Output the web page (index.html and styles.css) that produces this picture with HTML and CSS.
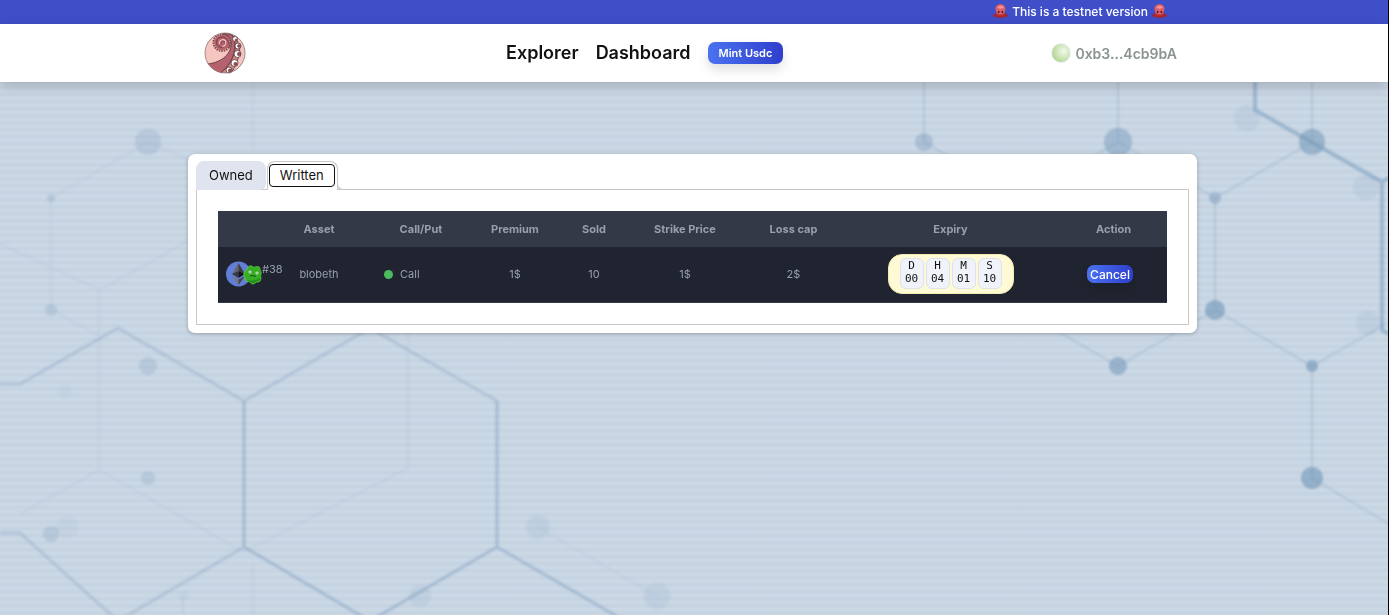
FILE: index.html
```html
<!DOCTYPE html>
<html lang="en">
<head>
    <meta charset="UTF-8">
    <meta name="viewport" content="width=device-width, initial-scale=1.0">
    <title>Dashboard</title>
    <link rel="stylesheet" href="styles.css">
</head>
<body>
    <!-- Molecule backdrop -->
    <svg class="backdrop" viewBox="0 0 1389 615" preserveAspectRatio="xMidYMid slice" aria-hidden="true">
        <defs>
            <filter id="soft"><feGaussianBlur stdDeviation="1"/></filter>
        </defs>
        <g fill="none" stroke="#7f9fc0" filter="url(#soft)">
            <path d="M0 384H20L118 328L244 401L370 328L497 401V547L370 621L244 547L118 621L20 533H0M244 401V547M497 547L625 621" stroke-width="3" opacity="0.32"/>
            <path d="M497 401V547L370 621L244 547V401M497 547L625 621" stroke-width="3" opacity="0.2"/>
            <g stroke-width="2" opacity="0.1">
                <path d="M51 198V310L100 336M51 198L148 142L200 165M99 290V470L20 514M99 470L244 552L408 468V330M253 82V150M253 565V615M0 244L100 290L190 240"/>
                <path d="M538 527L657 596M183 596V615"/>
            </g>
            <path d="M924 82V142L1021 198L1118 142V82M1118 142L1215 198L1312 142V82M1215 198V310L1312 366L1389 322M1215 310L1118 366L1021 310M1312 366V478L1389 524" stroke-width="2" opacity="0.27"/>
            <path d="M1255 82V110L1382 182V330L1389 334M1382 182L1389 178" stroke="#6f9abb" stroke-width="4" opacity="0.5"/>
        </g>
        <g fill="#7296b8" filter="url(#soft)">
            <g opacity="0.22">
                <circle cx="148" cy="142" r="13"/>
                <circle cx="51" cy="198" r="4"/>
                <circle cx="51" cy="310" r="6"/>
                <circle cx="148" cy="366" r="9"/>
                <circle cx="148" cy="478" r="7"/>
                <circle cx="51" cy="534" r="8"/>
            </g>
            <g opacity="0.12">
                <circle cx="65" cy="391" r="7" opacity="0.5"/>
                <circle cx="67" cy="527" r="11" opacity="0.6"/>
                <circle cx="183" cy="596" r="5" opacity="0.6"/>
                <circle cx="420" cy="596" r="11"/>
                <circle cx="538" cy="527" r="12"/>
                <circle cx="657" cy="596" r="13"/>
                <circle cx="1247" cy="118" r="13"/>
                <circle cx="1366" cy="187" r="13"/>
                <circle cx="1368" cy="323" r="12"/>
            </g>
            <g opacity="0.6">
                <circle cx="924" cy="142" r="9" opacity="0.6"/>
                <circle cx="1118" cy="142" r="14" opacity="0.75"/>
                <circle cx="1312" cy="142" r="13" opacity="0.9"/>
                <circle cx="1215" cy="198" r="6" opacity="0.7"/>
                <circle cx="1215" cy="310" r="10"/>
                <circle cx="1118" cy="366" r="9" opacity="0.9"/>
                <circle cx="1312" cy="366" r="6"/>
                <circle cx="1312" cy="478" r="11"/>
            </g>
        </g>
    </svg>

    <!-- Shared octopus icon -->
    <svg class="sprite" aria-hidden="true">
        <symbol id="octopus" viewBox="0 0 16 16">
            <path fill="#a5242b" d="M4 9C3 11 1 10 .3 12C0 14 2 14 3 13L2.500 15L5 13.500L6 15.500L8 14L10 15.500L11 13.500L13.500 15L13 13C14 14 16 14 15.700 12C15 10 13 11 12 9Z"/>
            <path fill="#dc5f65" d="M8 .3C4 .3 2.300 3 2.800 6C3.200 8 4 9 4 11C6 13 10 13 12 11C12 9 12.800 8 13.200 6C13.700 3 12 .3 8 .3Z"/>
            <path fill="#f0969a" d="M4.500 3.500C6 1.300 10 1.300 11.500 3.500C10.500 5.500 5.500 5.500 4.500 3.500Z"/>
            <path fill="#b82d34" d="M4 10C7 11.500 9 11.500 12 10L12.500 13H3.500Z"/>
            <circle cx="6" cy="8.500" r="1" fill="#3d1115"/>
            <circle cx="10" cy="8.500" r="1" fill="#3d1115"/>
        </symbol>
    </svg>

    <div class="banner">
        <p class="container banner-text">
            <svg class="emoji"><use href="#octopus"/></svg>
            <span>This is a testnet version</span>
            <svg class="emoji"><use href="#octopus"/></svg>
        </p>
    </div>

    <header class="header">
        <div class="container header-inner">
            <a href="#" class="logo" aria-label="Home">
                <svg viewBox="0 0 42 42">
                    <defs>
                        <clipPath id="logoClip"><circle cx="21" cy="21" r="20"/></clipPath>
                    </defs>
                    <circle cx="21" cy="21" r="20" fill="#f5c6c0"/>
                    <g clip-path="url(#logoClip)" stroke="#57343a" stroke-width="0.8">
                        <path fill="#cf8981" d="M24 1C35 5 38 17 34 27C32 33 29 38 27 42H15C25 35 31 24 31 14C31 8 29 4 24 1Z"/>
                        <path fill="#b5626f" d="M3 32C15 31 27 24 27 12C27 6 24 3 18 2C28 0 31 5 31 13C31 25 24 36 15 42H8Z"/>
                        <circle cx="18" cy="10.500" r="8.500" fill="none" stroke="#7d4a4c" stroke-width="2" stroke-dasharray="1.500 1"/>
                        <circle cx="18" cy="10.500" r="7.800" fill="#b5626f" stroke="none"/>
                        <path fill="none" stroke="#6d3a44" stroke-width="0.900" d="M25 16C26 9 22 5 18 5C12 5.500 11 12 14.500 14.500C18 17 22 13 21 10C19.500 8 16.500 9 17 12"/>
                        <path fill="none" stroke="#f5c6c0" stroke-width="1.200" d="M15.500 12C15 8 19 6.500 21.500 9C23 12 20 15 18 14"/>
                    </g>
                    <g fill="#fff" stroke="#55363a" stroke-width="0.8">
                        <circle cx="31" cy="7" r="2.500"/>
                        <circle cx="34" cy="14" r="3"/>
                        <circle cx="33.500" cy="22" r="3.500"/>
                        <circle cx="30.500" cy="31" r="3.500"/>
                        <circle cx="25" cy="38" r="3"/>
                    </g>
                    <g fill="#a2495a" stroke="#55363a" stroke-width="0.5">
                        <circle cx="32" cy="8" r="1"/>
                        <circle cx="35" cy="14" r="1.500"/>
                        <circle cx="35" cy="22" r="1.700"/>
                        <circle cx="31.500" cy="32" r="1.700"/>
                        <circle cx="26" cy="38.500" r="1.700"/>
                    </g>
                    <circle cx="21" cy="21" r="20" fill="none" stroke="#8b7472" stroke-width="0.8"/>
                </svg>
            </a>
            <nav class="nav">
                <a href="#" class="nav-link">Explorer</a>
                <a href="#" class="nav-link">Dashboard</a>
                <button type="button" class="btn">Mint Usdc</button>
            </nav>
            <div class="wallet">
                <span class="avatar"></span>
                <span>0xb3...4cb9bA</span>
            </div>
        </div>
    </header>

    <main class="main">
        <section class="container card">
            <div class="tabs" role="tablist">
                <button type="button" class="tab" role="tab" id="tabOwned" aria-selected="false">Owned</button>
                <button type="button" class="tab tab-active" role="tab" id="tabWritten" aria-selected="true" aria-controls="panel"><span class="tab-focus">Written</span></button>
            </div>
            <div class="panel" role="tabpanel" id="panel" aria-labelledby="tabWritten">
                <table class="options">
                    <colgroup>
                        <col class="col-id">
                        <col class="col-asset">
                        <col class="col-type">
                        <col class="col-premium">
                        <col class="col-sold">
                        <col class="col-strike">
                        <col class="col-loss">
                        <col class="col-expiry">
                        <col class="col-action">
                    </colgroup>
                    <thead>
                        <tr>
                            <th></th>
                            <th>Asset</th>
                            <th>Call/Put</th>
                            <th>Premium</th>
                            <th>Sold</th>
                            <th>Strike Price</th>
                            <th>Loss cap</th>
                            <th>Expiry</th>
                            <th>Action</th>
                        </tr>
                    </thead>
                    <tbody>
                        <tr>
                            <td>
                                <div class="token">
                                    <svg class="token-icon" viewBox="0 0 36 26" aria-hidden="true">
                                        <circle cx="12.500" cy="13" r="12.500" fill="#627fd8"/>
                                        <path fill="#65656b" d="M12.500 2L6 13L12.500 10Z"/>
                                        <path fill="#3b3b40" d="M12.500 2L19 13L12.500 10Z"/>
                                        <path fill="#38383c" d="M6 13L12.500 10V17Z"/>
                                        <path fill="#151518" d="M19 13L12.500 10V17Z"/>
                                        <path fill="#77777c" d="M6 15L12.500 18.500V24Z"/>
                                        <path fill="#45454a" d="M19 15L12.500 18.500V24Z"/>
                                        <path fill="#37ae24" stroke="#5fd242" stroke-width="0.700" d="M24 5C26 4 27 7 29 6C31 5 34 5 34 8C34 10 36 11 35 13C34 15 36 18 34 20C32 22 31 20 29 22C28 24 25 23 24 21C22 20 19 21 19 18C20 16 17 15 18 12C18 10 21 10 21 8C21 6 23 5 24 5Z"/>
                                        <path fill="#218b17" d="M21 19C25 20 30 20 34 17L34 19C31 21 29 20 28 22C26 23 24 20 22 20Z"/>
                                        <circle cx="24" cy="11" r="1.500" fill="#e6f3df"/>
                                        <circle cx="31" cy="12" r="1.500" fill="#e6f3df"/>
                                        <circle cx="24" cy="11" r="0.600" fill="#26351f"/>
                                        <circle cx="31" cy="12" r="0.600" fill="#26351f"/>
                                        <path fill="none" stroke="#164f0f" d="M24 15C26 13.500 28 16 30 15"/>
                                    </svg>
                                    <span class="token-id">#38</span>
                                </div>
                            </td>
                            <td>blobeth</td>
                            <td><div class="type"><span class="dot"></span>Call</div></td>
                            <td>1$</td>
                            <td>10</td>
                            <td>1$</td>
                            <td>2$</td>
                            <td>
                                <div class="countdown">
                                    <div class="unit"><span>D</span><span>00</span></div>
                                    <div class="unit"><span>H</span><span>04</span></div>
                                    <div class="unit"><span>M</span><span>01</span></div>
                                    <div class="unit"><span>S</span><span>10</span></div>
                                </div>
                            </td>
                            <td class="action"><button type="button" class="btn btn-cancel">Cancel</button></td>
                        </tr>
                    </tbody>
                </table>
            </div>
        </section>
    </main>
</body>
</html>
```
FILE: styles.css
```css
* {
    box-sizing: border-box;
}
body {
    margin: 0;
    min-height: 100vh;
    font-family: Inter, "Liberation Sans", sans-serif;
    color: #111;
    border-right: 1px solid #000;
    background: repeating-linear-gradient(to bottom, #ccd9e6 0, #c5d2e1 4px, #ccd9e6 7px);
}
.backdrop {
    position: fixed;
    top: 0;
    left: 0;
    z-index: -1;
    width: 100%;
    height: 100%;
}
.sprite {
    display: none;
}
.container {
    width: 100%;
    max-width: 1009px;
    margin: 0 auto;
}

/* Top bar */
.banner {
    background: #3f4fc8;
    color: #fff;
    padding-right: 3px;
}
.banner-text {
    display: flex;
    align-items: center;
    justify-content: flex-end;
    gap: 4px;
    height: 24px;
    padding: 0 30px 1px 0;
    font-size: 12px;
    font-weight: 500;
}
.emoji {
    width: 15px;
    height: 15px;
}
.header {
    background: #fff;
    padding-right: 3px;
    box-shadow: 0 4px 12px rgba(0, 0, 0, 0.2);
}
.header-inner {
    display: flex;
    align-items: center;
    justify-content: space-between;
    height: 58px;
    padding: 0 20px 0 16px;
}
.logo svg {
    display: block;
    width: 42px;
    height: 42px;
}
.nav {
    display: flex;
    align-items: center;
    gap: 17px;
}
.nav-link {
    color: #111;
    font-size: 18px;
    font-weight: 600;
    line-height: 24px;
    text-decoration: none;
}
.btn {
    border: none;
    border-radius: 7px;
    padding: 0 11px;
    height: 22px;
    background: linear-gradient(to right, #4a72f0, #2f3fcc);
    color: #fff;
    font-family: inherit;
    font-size: 11px;
    font-weight: 600;
    box-shadow: 0 6px 12px rgba(0, 0, 0, 0.12);
    cursor: pointer;
}
.wallet {
    display: flex;
    align-items: center;
    gap: 4px;
    padding-left: 8px;
    color: #8a9490;
    font-size: 14px;
    font-weight: 600;
}
.avatar {
    width: 20px;
    height: 20px;
    border: 1px solid #e9f0fa;
    border-radius: 50%;
    background: radial-gradient(circle at 65% 40%, #f3f9ec, #bcdb9c 65%, #a9cd85);
}

/* Positions card */
.main {
    padding: 72px 3px 72px 0;
}
.card {
    padding: 7px 8px 8px;
    background: #fff;
    border-radius: 7px;
    box-shadow: 0 1px 4px rgba(0, 0, 0, 0.25);
}
.tabs {
    display: flex;
    align-items: stretch;
    gap: 1px;
    height: 29px;
}
.tab {
    padding: 0 13px 1px;
    border: none;
    border-radius: 8px 8px 6px 0;
    background: #e0e4ee;
    color: #111;
    font-family: inherit;
    font-size: 13px;
    cursor: pointer;
}
.tab-active {
    position: relative;
    padding: 2px 2px 3px 1px;
    border: 1px solid #c8c8c8;
    border-bottom: none;
    border-radius: 8px 8px 0 0;
    background: #fff;
}
.tab-active::after {
    content: "";
    position: absolute;
    left: 100%;
    bottom: 0;
    width: 6px;
    height: 6px;
    border: 1px solid #c8c8c8;
    border-width: 0 0 1px 1px;
    border-bottom-left-radius: 6px;
    background: #fff;
}
.tab-focus {
    display: block;
    padding: 0 10px;
    border: 1px solid #111;
    border-radius: 4px;
    line-height: 21px;
}
.panel {
    margin-top: -1px;
    padding: 21px;
    border: 1px solid #c8c8c8;
}
.options {
    width: 100%;
    table-layout: fixed;
    border-collapse: collapse;
    background: #1f2430;
    color: #9a9fac;
    font-size: 11px;
    text-align: center;
}
.options thead {
    background: #333946;
}
.options th {
    height: 36px;
    padding: 0;
    font-weight: 700;
}
.options td {
    height: 55px;
    padding: 0 8px;
    border-bottom: 1px solid #333946;
}
.options .action {
    padding-right: 15px;
}
.col-id { width: 44px; }
.col-asset { width: 114px; }
.col-type { width: 90px; }
.col-premium { width: 98px; }
.col-sold { width: 60px; }
.col-strike { width: 122px; }
.col-loss { width: 95px; }
.col-expiry { width: 219px; }
.token {
    display: flex;
    align-items: center;
}
.token-icon {
    flex: none;
    width: 36px;
    height: 26px;
}
.token-id {
    padding-bottom: 10px;
}
.type {
    display: flex;
    align-items: center;
    gap: 7px;
}
.dot {
    width: 9px;
    height: 9px;
    border-radius: 50%;
    background: #4cba5c;
}
.countdown {
    display: inline-flex;
    gap: 2px;
    height: 40px;
    padding: 3px 11px 4px;
    border: 1px solid #f3ebb0;
    border-radius: 14px;
    background: #fefad6;
    vertical-align: middle;
}
.unit {
    display: flex;
    flex-direction: column;
    width: 24px;
    border: 1px solid #dfe2ea;
    border-radius: 6px;
    background: #f0f3f9;
    color: #111;
    font-family: "DejaVu Sans Mono", monospace;
    font-size: 11px;
    line-height: 13px;
}
.btn-cancel {
    height: 18px;
    padding: 0 3px;
    font-size: 12px;
    font-weight: 500;
}
```
